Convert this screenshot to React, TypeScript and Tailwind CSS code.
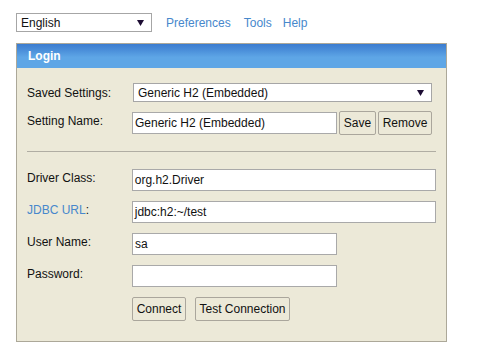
import type { ReactNode } from "react";

const font = { fontFamily: '"Liberation Sans", Arial, sans-serif' };

function Arrow() {
  return (
    <svg width="7" height="6" viewBox="0 0 7 6" className="shrink-0">
      <path d="M0 0 H7 L3.5 6 Z" fill="#1d0d33" />
    </svg>
  );
}

function Select({ value, className }: { value: string; className: string }) {
  return (
    <div
      className={`flex items-center justify-between border border-[#a6a6a6] bg-white pl-[4px] pr-[7px] text-[12px] text-[#111] ${className}`}
    >
      <span>{value}</span>
      <Arrow />
    </div>
  );
}

function Input({ value = "", width }: { value?: string; width: string }) {
  return (
    <div
      className={`flex h-[22px] items-center border border-[#a9a9a9] bg-white pl-[2px] text-[12px] text-[#111] ${width}`}
    >
      {value}
    </div>
  );
}

function Button({ children, width }: { children: ReactNode; width: string }) {
  return (
    <div
      className={`flex h-[24px] items-center justify-center rounded-[2px] border border-[#aaa69c] bg-[#ece9d8] text-[12px] text-[#111] ${width}`}
    >
      {children}
    </div>
  );
}

function Row({ label, children }: { label: ReactNode; children: ReactNode }) {
  return (
    <div className="flex items-start">
      <div className="w-[105px] pt-[2px] text-[12px] leading-[14px] text-[#111]">{label}</div>
      {children}
    </div>
  );
}

export default function App() {
  return (
    <div className="h-[360px] w-[479px] bg-white" style={font}>
      <div className="flex items-center pl-[16px] pt-[13px]">
        <Select value="English" className="h-[19px] w-[136px]" />
        <a className="ml-[14px] text-[12px] text-[#4788cc]">Preferences</a>
        <a className="ml-[13px] text-[12px] text-[#4788cc]">Tools</a>
        <a className="ml-[11px] text-[12px] text-[#4788cc]">Help</a>
      </div>

      <div className="ml-[16px] mt-[11px] w-[431px] border border-[#aca899] bg-[#ece9d8]">
        <div className="flex h-[24px] items-center bg-[linear-gradient(to_bottom,#3b7cd0_0%,#4a8ed9_25%,#5ea6e6_55%,#5ea6e6_100%)] pl-[11px] text-[12px] font-bold text-white">
          Login
        </div>

        <div className="px-[10px] pb-[20px] pt-[15px]">
          <div className="flex items-center">
            <div className="w-[106px] text-[12px] text-[#111]">Saved Settings:</div>
            <Select value="Generic H2 (Embedded)" className="h-[19px] w-[299px]" />
          </div>

          <div className="mt-[9px] flex items-start">
            <div className="w-[105px] pt-[3px] text-[12px] leading-[14px] text-[#111]">Setting Name:</div>
            <div className="flex items-center gap-[2px]">
              <Input value="Generic H2 (Embedded)" width="w-[205px]" />
              <Button width="w-[37px]">Save</Button>
              <Button width="w-[54px]">Remove</Button>
            </div>
          </div>

          <div className="mt-[16px] h-px w-[409px] bg-[#b0ada3]" />

          <div className="mt-[17px] flex flex-col gap-[10px]">
            <Row label="Driver Class:">
              <Input value="org.h2.Driver" width="w-[305px]" />
            </Row>
            <Row
              label={
                <>
                  <a className="text-[#4788cc]">JDBC URL</a>:
                </>
              }
            >
              <Input value="jdbc:h2:~/test" width="w-[305px]" />
            </Row>
            <Row label="User Name:">
              <Input value="sa" width="w-[205px]" />
            </Row>
            <Row label="Password:">
              <Input width="w-[205px]" />
            </Row>
            <div className="flex pl-[105px]">
              <Button width="w-[54px]">Connect</Button>
              <div className="ml-[9px]">
                <Button width="w-[95px]">Test Connection</Button>
              </div>
            </div>
          </div>
        </div>
      </div>
    </div>
  );
}
